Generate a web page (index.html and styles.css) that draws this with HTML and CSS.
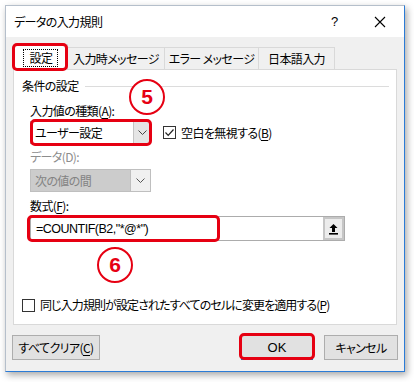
FILE: index.html
```html
<html lang="ja">
<head>
  <meta charset="UTF-8">
  <title>データの入力規則</title>
  <link rel="stylesheet" href="styles.css">
</head>
<body>
  <div class="window">
    <div class="titlebar">
      <span class="title">データの入力規則</span>
      <span class="help">?</span>
      <span class="close">
        <svg width="12" height="12" viewBox="0 0 12 12"><path d="M1 1L11 11M11 1L1 11" stroke="#000" stroke-width="1.1"/></svg>
      </span>
    </div>

    <div class="tabs">
      <div class="tab active"><span class="focus">設定</span><i class="mark"></i></div>
      <div class="tab t2">入力時メッセージ</div>
      <div class="tab t3">エラー メッセージ</div>
      <div class="tab t4">日本語入力</div>
    </div>

    <div class="panel">
      <div class="group-title"><span>条件の設定</span><i></i></div>

      <div class="field-label">入力値の種類(<u>A</u>):</div>
      <div class="row">
        <div class="select">
          <span class="value">ユーザー設定</span>
          <span class="arrow"><svg width="9" height="5" viewBox="0 0 9 5"><path d="M0.5 0.5L4.5 4.5L8.5 0.5" fill="none" stroke="#444"/></svg></span>
          <i class="mark"></i>
        </div>
        <label class="check">
          <span class="box"><svg width="11" height="11" viewBox="0 0 11 11"><path d="M1.5 5.5L4.2 8.3L9.5 2.5" fill="none" stroke="#222" stroke-width="1.2"/></svg></span>
          空白を無視する(<u>B</u>)
        </label>
      </div>

      <div class="field-label disabled d-label">データ(D):</div>
      <div class="select disabled">
        <span class="value">次の値の間</span>
        <span class="arrow"><svg width="9" height="5" viewBox="0 0 9 5"><path d="M0.5 0.5L4.5 4.5L8.5 0.5" fill="none" stroke="#555"/></svg></span>
      </div>

      <div class="field-label f-label">数式(<u>F</u>):</div>
      <div class="formula">
        <span class="formula-text">=COUNTIF(B2,"*@*")</span>
        <span class="pick">
          <svg width="11" height="12" viewBox="0 0 11 12"><path d="M5.5 1L1.5 5H4V9H7V5H9.5Z" fill="#000"/><rect x="1" y="10" width="9" height="1.6" fill="#000"/></svg>
        </span>
        <i class="mark"></i>
      </div>

      <label class="check apply">
        <span class="box"></span>
        同じ入力規則が設定されたすべてのセルに変更を適用する(<u>P</u>)
      </label>

      <div class="badge b5">5</div>
      <div class="badge b6">6</div>
    </div>

    <div class="buttons">
      <button class="btn clear">すべてクリア(<u>C</u>)</button>
      <span class="spacer"></span>
      <button class="btn ok">OK<i class="mark"></i></button>
      <button class="btn cancel">キャンセル</button>
    </div>
  </div>
</body>
</html>
```

FILE: styles.css
```css
body {
  margin: 0;
  background: #fff;
  font-family: "Noto Sans CJK JP", "Noto Sans", sans-serif;
  font-size: 12px;
  letter-spacing: -0.6px;
  font-feature-settings: "palt";
  color: #000;
}
u {
  text-decoration: underline;
  text-underline-offset: 2px;
}
.window {
  position: relative;
  margin: 5px 0 0 5px;
  width: 398px;
  height: 365px;
  background: #f0f0f0;
  border: 1px solid #b5bfcb;
  border-right-color: #2b7bd6;
  border-bottom-color: #2b7bd6;
  box-shadow: 2px 3px 7px rgba(0,0,0,0.35);
}
.titlebar {
  display: flex;
  align-items: center;
  height: 31px;
  background: #fff;
  padding-left: 8px;
}
.title {
  flex: 1;
}
.help {
  width: 14px;
  margin-right: 29px;
  font-family: "Liberation Sans", sans-serif;
  font-size: 13px;
  letter-spacing: 0;
}
.close {
  display: flex;
  margin-right: 18px;
}
.tabs {
  display: flex;
  align-items: flex-end;
  height: 33px;
  padding-left: 7px;
}
.tab {
  position: relative;
  height: 23px;
  line-height: 22px;
  text-align: center;
  border: 1px solid #d9d9d9;
  border-bottom: none;
  margin-left: -1px;
  box-sizing: border-box;
}
.tab:first-child {
  margin-left: 0;
}
.t2 {
  width: 98px;
}
.t3 {
  width: 95px;
}
.t4 {
  width: 77px;
}
.tab.active {
  height: 26px;
  width: 55px;
  background: #fff;
  display: flex;
  justify-content: center;
  padding-top: 4px;
  z-index: 1;
}
.focus {
  display: block;
  height: 16px;
  line-height: 15px;
  padding: 0 5px 0 6px;
  border: 1px dotted #000;
}
.mark {
  position: absolute;
  border: 3px solid #e60012;
  border-radius: 5px;
  pointer-events: none;
}
.tab .mark {
  left: -2px;
  top: -2px;
  right: -1px;
  bottom: -1px;
}
.panel {
  position: relative;
  width: 350px;
  height: 254px;
  margin-left: 7px;
  margin-top: -1px;
  background: #fff;
  border: 1px solid #d9d9d9;
  padding: 0 16px;
}
.group-title {
  display: flex;
  align-items: center;
  margin: 8px -9px 0 -8px;
  line-height: 16px;
}
.group-title i {
  flex: 1;
  height: 1px;
  background: #dcdcdc;
  margin-left: 6px;
}
.field-label {
  line-height: 16px;
  margin-top: 9px;
}
.field-label.disabled {
  color: #8d8d8d;
}
.d-label {
  margin-top: 3px;
}
.f-label {
  margin-top: 6px;
}
.row {
  display: flex;
  align-items: center;
  height: 27px;
}
.select {
  position: relative;
  display: flex;
  align-items: center;
  width: 121px;
  height: 23px;
  box-sizing: border-box;
  border: 1px solid #acacac;
  background: #fff;
}
.select .value {
  flex: 1;
  padding-left: 4px;
}
.select .arrow {
  display: flex;
  align-items: center;
  justify-content: center;
  width: 16px;
  height: 100%;
  background: #e5e5e5;
  border-left: 1px solid #c4c4c4;
}
.select .mark {
  left: -1px;
  top: -3px;
  right: -2px;
  bottom: -3px;
}
.select.disabled {
  margin-top: 4px;
  background: #cccccc;
  border-color: #bfbfbf;
  color: #838383;
}
.select.disabled .arrow {
  background: #f0f0f0;
  border-left-color: #bfbfbf;
  width: 19px;
}
.check {
  display: flex;
  align-items: center;
  line-height: 16px;
}
.row .check {
  margin-left: 12px;
}
.box {
  display: flex;
  align-items: center;
  justify-content: center;
  width: 13px;
  height: 13px;
  box-sizing: border-box;
  border: 1px solid #333;
  background: #fff;
  margin-right: 5px;
}
.formula {
  position: relative;
  display: flex;
  align-items: center;
  width: 315px;
  height: 25px;
  margin-top: 2px;
  box-sizing: border-box;
  border: 1px solid #acacac;
}
.formula-text {
  flex: 1;
  padding-left: 5px;
  font-family: "Liberation Sans", sans-serif;
  font-size: 12.5px;
  letter-spacing: -0.5px;
}
.pick {
  display: flex;
  align-items: center;
  justify-content: center;
  width: 21px;
  height: 23px;
  box-sizing: border-box;
  border: 2px solid #c6c6c6;
  background: #ececec;
}
.formula .mark {
  left: -4px;
  top: -2px;
  width: 193px;
  height: 27px;
  box-sizing: border-box;
}
.check.apply {
  margin: 56px 0 0 -8px;
  letter-spacing: -0.9px;
}
.badge {
  position: absolute;
  width: 36px;
  height: 36px;
  box-sizing: border-box;
  border: 2.5px solid #e60012;
  border-radius: 50%;
  background: #fff;
  color: #e60012;
  font-family: "Liberation Sans", sans-serif;
  font-weight: bold;
  font-size: 21px;
  letter-spacing: 0;
  line-height: 31px;
  text-align: center;
}
.b5 {
  left: 115px;
  top: 9px;
}
.b6 {
  left: 83px;
  top: 177px;
}
.buttons {
  display: flex;
  margin: 10px 0 0 6px;
  width: 386px;
}
.spacer {
  flex: 1;
}
.btn {
  position: relative;
  height: 25px;
  padding: 0;
  border: 1px solid #adadad;
  background: #e1e1e1;
  font-family: "Noto Sans CJK JP", "Noto Sans", sans-serif;
  font-size: 12px;
  letter-spacing: -0.6px;
  font-feature-settings: "palt";
  color: #000;
}
.clear {
  width: 88px;
}
.ok {
  width: 72px;
  border-color: #0078d7;
  font-family: "Liberation Sans", sans-serif;
  font-size: 13px;
  letter-spacing: 0;
}
.ok .mark {
  left: -3px;
  top: -3px;
  right: -3px;
  bottom: -1px;
}
.cancel {
  width: 74px;
  margin-left: 11px;
}
```
